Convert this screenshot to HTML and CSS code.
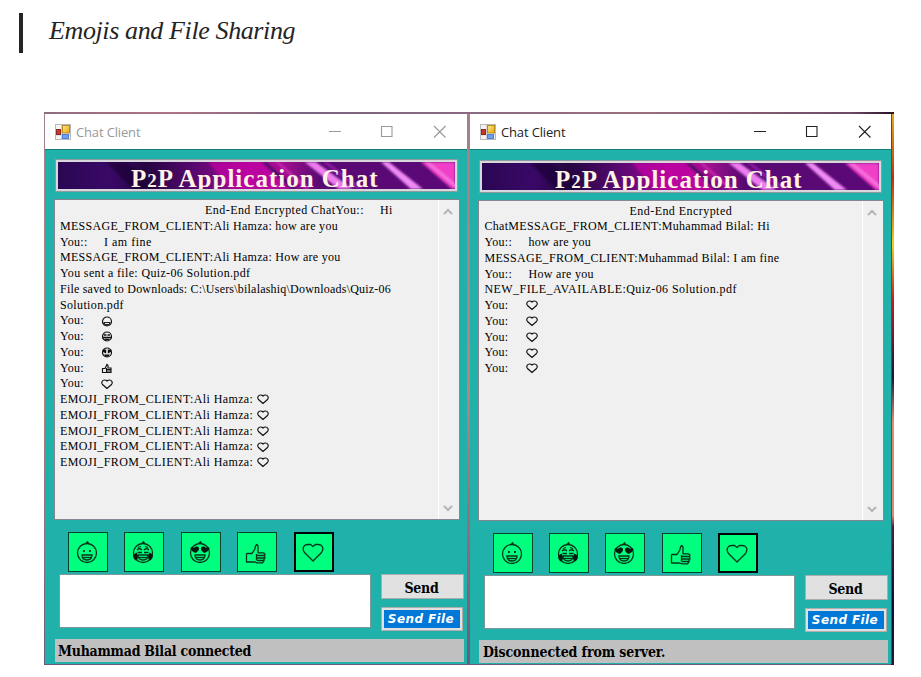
FILE: index.html
```
<!DOCTYPE html>
<html lang="en">
<head>
<meta charset="utf-8">
<title>Emojis and File Sharing</title>
<link rel="stylesheet" href="styles.css">
</head>
<body>
<svg class="defs" aria-hidden="true">
  <defs>
    <linearGradient id="gold" x1="0" y1="0" x2="1" y2="1"><stop offset="0" stop-color="#ffe98a"/><stop offset="1" stop-color="#e8a60a"/></linearGradient>
    <linearGradient id="base" x1="0" y1="0" x2="1" y2="0"><stop offset="0" stop-color="#2a0752"/><stop offset=".13" stop-color="#3a0868"/><stop offset=".22" stop-color="#240640"/><stop offset=".34" stop-color="#55086e"/><stop offset=".48" stop-color="#a60a98"/><stop offset=".57" stop-color="#a1108f"/><stop offset=".66" stop-color="#580a72"/><stop offset="1" stop-color="#5c0878"/></linearGradient>
    <filter id="soft" x="-20%" y="-20%" width="140%" height="140%"><feGaussianBlur stdDeviation="1.2"/></filter>
    <symbol id="form" viewBox="0 0 16 16">
      <rect x=".5" y=".5" width="15" height="15" fill="#f4f4f4" stroke="#b9b9b9"/>
      <path d="M1 11h14M6.5 1v14" stroke="#d0d0d0"/>
      <rect x="7.500" y="1.500" width="7" height="7.500" fill="url(#gold)" stroke="#b98a1c"/>
      <rect x="1.500" y="5.500" width="4" height="5" fill="#c8372c" stroke="#8d2a22"/>
      <rect x="7.500" y="10.500" width="6" height="4" fill="#6ea0ee" stroke="#4a7fdc"/>
    </symbol>
    <symbol id="art" viewBox="0 0 396 27" preserveAspectRatio="none">
      <rect width="396" height="27" fill="url(#base)"/>
      <g filter="url(#soft)">
        <path d="M48 0h20l32 27H74z" fill="#1d0436" opacity=".7"/>
        <path d="M150 0h60l32 27h-70z" fill="#c409a4" opacity=".7"/>
        <path d="M203 0h5l32 27h-8z" fill="#4a0b68"/>
        <path d="M217 0h3l32 27h-5z" fill="#c92ab2"/>
        <path d="M246 0h11l37 27h-14z" fill="#ee7df0"/>
        <path d="M264 0h5l37 27h-8z" fill="#8b14a0"/>
        <path d="M322 0h8l34 27h-12z" fill="#f08af4"/>
        <path d="M362 0h34v27h-3z" fill="#f03fc8"/>
        <path d="M366 0h4l28 23v4z" fill="#f876df"/>
      </g>
    </symbol>
    <g id="head"><circle cx="11" cy="12" r="9.500"/><path d="M10 2.200l1.500-1.400 1 1.400"/></g>
    <g id="mouth"><path d="M6 14h10c0 3-2 5-5 5s-5-2-5-5z"/><path d="M7 16.500h8"/></g>
    <symbol id="grin" viewBox="0 0 22 23"><g fill="none" stroke="#06351b" stroke-width="1.300"><use href="#head"/><use href="#mouth"/></g><path d="M7 9h1.800v2H7zM13 9h1.800v2H13z" fill="#06351b"/></symbol>
    <symbol id="joy" viewBox="0 0 22 23"><g fill="none" stroke="#06351b" stroke-width="1.300"><use href="#head"/><use href="#mouth"/><path d="M5 9q2.500-2.500 5 0M12 9q2.500-2.500 5 0M5.500 11.500H10M12 11.500h4.500M6 6.500l3-1M16 6.500l-3-1"/></g><path d="M4.500 11.500c2 3 2 7-.5 8-2-1-3.500-4-2.500-6zM17.500 11.500c-2 3-2 7 .5 8 2-1 3.500-4 2.500-6z" fill="#06190f"/></symbol>
    <symbol id="love" viewBox="0 0 22 23"><g fill="none" stroke="#06351b" stroke-width="1.300"><use href="#head"/><use href="#mouth"/></g><path d="M1.500 7c1-1.500 2.500-1 3.500 0 1-2 4-2 5 0 .5 2-2 4-3 5-2-.5-5-2-5.500-5zM20.500 7c-1-1.500-2.500-1-3.500 0-1-2-4-2-5 0-.5 2 2 4 3 5 2-.5 5-2 5.500-5z" fill="#06190f"/></symbol>
    <symbol id="thumb" viewBox="0 0 22 23"><g fill="none" stroke="#06351b" stroke-width="1.300" stroke-linejoin="round"><path d="M1.500 12.500V21h8.500l2 .8h5.500l1.500-2v-1.500l1-1.500-.5-2 .5-1.500-1.500-1.500H13V5l-1.200-1.500L10.500 5c0 3.500-2 5-3.500 7.500H1.500M11.500 14.500h7.500M12 17h7M12 19.500h7M11.500 13v6.500"/></g></symbol>
    <symbol id="heart" viewBox="0 0 22 23"><path d="M11 20L2.500 11.500C-.5 7 2 3.500 5.500 3.500h3L11 5.500l2.500-2h3C20 3.500 22.500 7 19.500 11.500z" fill="none" stroke="#06351b" stroke-width="1.300"/></symbol>
    <symbol id="mini-heart" viewBox="0 0 12 11"><path d="M6 9.500L1.500 5.500C-.2 3.500 1.500 1 3.500 1 5 1 6 2 6 2S7 1 8.500 1c2 0 3.700 2.500 2 4.500z" fill="none" stroke="#111" stroke-width="1.150"/></symbol>
    <symbol id="mini-grin" viewBox="0 0 12 11"><circle cx="6" cy="5.500" r="4.500" fill="none" stroke="#111" stroke-width="1.200"/><path d="M2.500 6h7v2l-2 1.500h-3L2.500 8z" fill="#222"/><path d="M4 7.500h4" stroke="#eee"/></symbol>
    <symbol id="mini-joy" viewBox="0 0 12 11"><circle cx="6" cy="5.500" r="4.500" fill="none" stroke="#111" stroke-width="1.200"/><path d="M3 4h2.500M6.500 4H9M1 6.500h10M3.500 8.500h5" stroke="#111" stroke-width="1.300"/></symbol>
    <symbol id="mini-love" viewBox="0 0 12 11"><circle cx="6" cy="5.500" r="4.500" fill="none" stroke="#111" stroke-width="1.200"/><path d="M1.500 2.500h3.700v4L2 5zM10.500 2.500H6.800v4L10 5zM3 7.500h6L7.500 9.500h-3z" fill="#111"/></symbol>
    <symbol id="mini-thumb" viewBox="0 0 12 11"><path d="M1.500 5.500h2.500L6 1.500 7 2.500V5h3v4.500H1.500zM6 6.500h4M6 8h4M5.500 5v4" fill="none" stroke="#111" stroke-width="1.150"/></symbol>
    <symbol id="winbtns" viewBox="0 0 118 14"><path d="M0 6.500h12M52.500 1.500h10.500v10H52.500zM105 1l11.500 11.500M116.500 1L105 12.500" fill="none" stroke="currentColor" stroke-width="1.100"/></symbol>
    <symbol id="up" viewBox="0 0 10 7"><path d="M1 6l4-4 4 4" fill="none" stroke="#b5b5b5" stroke-width="2"/></symbol>
  </defs>
</svg>

<blockquote class="quote">Emojis and File Sharing</blockquote>

<main class="desktop">
  <section class="window inactive">
    <header class="titlebar"><svg class="app-icon"><use href="#form"/></svg><span class="caption">Chat Client</span><svg class="winbtns"><use href="#winbtns"/></svg></header>
    <div class="client">
      <div class="banner"><svg class="art"><use href="#art"/></svg><h1>P<small>2</small>P Application Chat</h1></div>
      <div class="chat">
        <div class="log">
          <p class="indent"><span class="a1">End-End Encrypted ChatYou::</span><span class="hi">Hi</span></p>
          <p class="a2">MESSAGE_FROM_CLIENT:Ali Hamza: how are you</p>
          <p><span class="you2">You::</span><span class="fine">I am fine</span></p>
          <p class="a2">MESSAGE_FROM_CLIENT:Ali Hamza: How are you</p>
          <p class="a3">You sent a file: Quiz-06 Solution.pdf</p>
          <p class="a4">File saved to Downloads: C:\Users\bilalashiq\Downloads\Quiz-06</p>
          <p class="a3">Solution.pdf</p>
          <p><span class="you">You:</span><svg class="mini"><use href="#mini-grin"/></svg></p>
          <p><span class="you">You:</span><svg class="mini"><use href="#mini-joy"/></svg></p>
          <p><span class="you">You:</span><svg class="mini"><use href="#mini-love"/></svg></p>
          <p><span class="you">You:</span><svg class="mini"><use href="#mini-thumb"/></svg></p>
          <p><span class="you">You:</span><svg class="mini"><use href="#mini-heart"/></svg></p>
          <p class="a5"><span>EMOJI_FROM_CLIENT:Ali Hamza:</span><svg class="mini"><use href="#mini-heart"/></svg></p>
          <p class="a5"><span>EMOJI_FROM_CLIENT:Ali Hamza:</span><svg class="mini"><use href="#mini-heart"/></svg></p>
          <p class="a5"><span>EMOJI_FROM_CLIENT:Ali Hamza:</span><svg class="mini"><use href="#mini-heart"/></svg></p>
          <p class="a5"><span>EMOJI_FROM_CLIENT:Ali Hamza:</span><svg class="mini"><use href="#mini-heart"/></svg></p>
          <p class="a5"><span>EMOJI_FROM_CLIENT:Ali Hamza:</span><svg class="mini"><use href="#mini-heart"/></svg></p>
        </div>
        <div class="scroll"><svg><use href="#up"/></svg><svg class="down"><use href="#up"/></svg></div>
      </div>
      <div class="emojis">
        <button><svg><use href="#grin"/></svg></button><button><svg><use href="#joy"/></svg></button><button><svg><use href="#love"/></svg></button><button><svg><use href="#thumb"/></svg></button><button class="focused"><svg><use href="#heart"/></svg></button>
      </div>
      <div class="compose">
        <div class="input"></div>
        <div class="actions"><button class="send">Send</button><button class="file"><span>Send File</span></button></div>
      </div>
      <footer class="status">Muhammad Bilal connected</footer>
    </div>
  </section>

  <section class="window active">
    <header class="titlebar"><svg class="app-icon"><use href="#form"/></svg><span class="caption">Chat Client</span><svg class="winbtns"><use href="#winbtns"/></svg></header>
    <div class="client">
      <div class="banner"><svg class="art"><use href="#art"/></svg><h1>P<small>2</small>P Application Chat</h1></div>
      <div class="chat">
        <div class="log">
          <p class="indent"><span class="a1">End-End Encrypted</span></p>
          <p class="b1">ChatMESSAGE_FROM_CLIENT:Muhammad Bilal: Hi</p>
          <p><span class="you2">You::</span><span class="how">how are you</span></p>
          <p class="b1">MESSAGE_FROM_CLIENT:Muhammad Bilal: I am fine</p>
          <p><span class="you2">You::</span><span class="how">How are you</span></p>
          <p class="b2">NEW_FILE_AVAILABLE:Quiz-06 Solution.pdf</p>
          <p><span class="you">You:</span><svg class="mini"><use href="#mini-heart"/></svg></p>
          <p><span class="you">You:</span><svg class="mini"><use href="#mini-heart"/></svg></p>
          <p><span class="you">You:</span><svg class="mini"><use href="#mini-heart"/></svg></p>
          <p><span class="you">You:</span><svg class="mini"><use href="#mini-heart"/></svg></p>
          <p><span class="you">You:</span><svg class="mini"><use href="#mini-heart"/></svg></p>
        </div>
        <div class="scroll"><svg><use href="#up"/></svg><svg class="down"><use href="#up"/></svg></div>
      </div>
      <div class="emojis">
        <button><svg><use href="#grin"/></svg></button><button><svg><use href="#joy"/></svg></button><button><svg><use href="#love"/></svg></button><button><svg><use href="#thumb"/></svg></button><button class="focused"><svg><use href="#heart"/></svg></button>
      </div>
      <div class="compose">
        <div class="input"></div>
        <div class="actions"><button class="send">Send</button><button class="file"><span>Send File</span></button></div>
      </div>
      <footer class="status">Disconnected from server.</footer>
    </div>
  </section>
</main>
</body>
</html>
```
FILE: styles.css
```
* { box-sizing: border-box; margin: 0; padding: 0; }
body { width: 921px; height: 677px; overflow: hidden; background: #fff; font-family: "Liberation Serif", serif; }
.defs { position: absolute; width: 0; height: 0; }
svg { display: block; }

.quote {
  margin: 13px 0 59px 19px; height: 40px; padding-left: 26px;
  border-left: 4px solid #242424; color: #242424;
  font: italic 26px/36px "Liberation Serif", serif; letter-spacing: -.38px; white-space: nowrap;
}

.desktop {
  display: flex; gap: 3px; width: 850px; height: 553px; margin-left: 44px; padding: 2px 2px 1px 1px;
  background:
    linear-gradient(90deg, #8f6d80, #b07484 15%, #7a6482 30%, #9b6f80 70%, #6d4a66 95%, #2a1020) top / 100% 2px no-repeat,
    linear-gradient(#e8b020, #c03010 12%, #f0d020 24%, #c02020 34%, #101840 48%, #e88a6a 56%, #e08870 73%, #4c2038 75%, #0c0c40 90%, #2a1830) right / 3px 100% no-repeat,
    linear-gradient(#a38088, #b5857f 50%, #6b5a7c) center / 100% 100%;
}
.window { width: 422px; height: 550px; background: #20b2aa; }
.active { border-right: 1px solid #24606a; }
.titlebar { display: flex; align-items: center; height: 36px; padding: 0 20px 0 10px; background: #fff; border-bottom: 1px solid #147c77; }
.app-icon { width: 16px; height: 16px; }
.caption { flex: 1; margin-left: 5px; color: #999; font: 13px/18px "Open Sans", sans-serif; letter-spacing: -.15px; }
.winbtns { width: 118px; height: 14px; color: #999; }
.active .titlebar { padding-right: 19px; }
.active .caption, .active .winbtns { color: #222; }

.client { padding: 9px 3px 0 9px; }
.active .client { padding: 10px 3px 0 8px; }
.banner { position: relative; width: 403px; height: 33px; margin-left: 1px; border: 3px solid #d8d8dc; outline: 1px solid #8d9ba0; outline-offset: -1px; overflow: hidden; }
.art { width: 100%; height: 100%; }
.banner h1 { position: absolute; left: 73px; top: 1px; color: #fff4e4; font: bold 25px/31px "Liberation Serif", serif; letter-spacing: 1px; white-space: nowrap; }
.banner small { font-size: 19px; }

.chat { display: flex; width: 406px; height: 321px; margin-top: 7px; border: 1px solid #828790; background: #f0f0f0; }
.log { flex: 1; padding: 3px 0 0 5px; color: #000; font-size: 12px; line-height: 15.75px; }
.active .log { padding: 2.5px 0 0 5.5px; }
.log p { display: flex; align-items: center; height: 15.75px; white-space: nowrap; }
.log .indent { padding-left: 145px; }
.hi { margin-left: 16px; letter-spacing: .5px; }
.you { width: 41px; letter-spacing: .3px; }
.you2 { width: 44px; letter-spacing: .3px; }
.a1 { letter-spacing: .45px; }
.a2, .b1, .how { letter-spacing: .3px; }
.a3 { letter-spacing: .35px; }
.a4 { letter-spacing: .21px; }
.a5 { letter-spacing: .39px; }
.b2 { letter-spacing: .43px; }
.fine { letter-spacing: .5px; }
.a5 span { width: 197px; }
.mini { width: 12px; height: 11px; }
.scroll { display: flex; flex-direction: column; justify-content: space-between; align-items: center; width: 21px; padding: 8px 2px 7px 0; border-left: 1px solid #fff; }
.scroll svg { width: 10px; height: 7px; }
.scroll .down { transform: scaleY(-1); }

.emojis { display: flex; gap: 16.4px; margin: 12px 0 2px 14px; }
.active .emojis { margin-left: 14.500px; }
.emojis button { display: grid; place-items: center; width: 40px; height: 40px; border: 1px solid #08402a; background: #00ff7f; }
.emojis .focused { border: 2px solid #000; }
.emojis svg { width: 22px; height: 23px; margin-left: -2px; }

.compose { display: flex; margin-left: 5px; height: 54px; }
.active .compose { margin-left: 6px; }
.input { width: 312px; border: 1px solid #7a9a9a; background: #fff; }
.actions { margin-left: 10px; }
.actions button { display: block; }
.send { width: 83px; height: 25px; padding: 2px 2px 0 0; border: 1px solid #adadad; background: #e1e1e1; font: bold 14px/20px "DejaVu Serif Condensed", "Liberation Serif", serif; letter-spacing: -.3px; }
.file { width: 82px; height: 24px; margin-top: 8px; padding: 2px; border: 1px solid #adadad; background: #e1e1e1; }
.file span { display: block; height: 18px; background: #0078d7; color: #fff; font: italic bold 12px/19px "DejaVu Sans", sans-serif; letter-spacing: .4px; text-indent: -2px; white-space: nowrap; }
.status { width: 409px; height: 23px; margin: 11px 0 0 1px; padding-left: 3px; background: #c0c0c0; color: #000; font: bold 14px/25px "DejaVu Serif Condensed", "Liberation Serif", serif; letter-spacing: -.23px; white-space: nowrap; }
.active .status { padding-left: 4px; letter-spacing: -.1px; }
```
